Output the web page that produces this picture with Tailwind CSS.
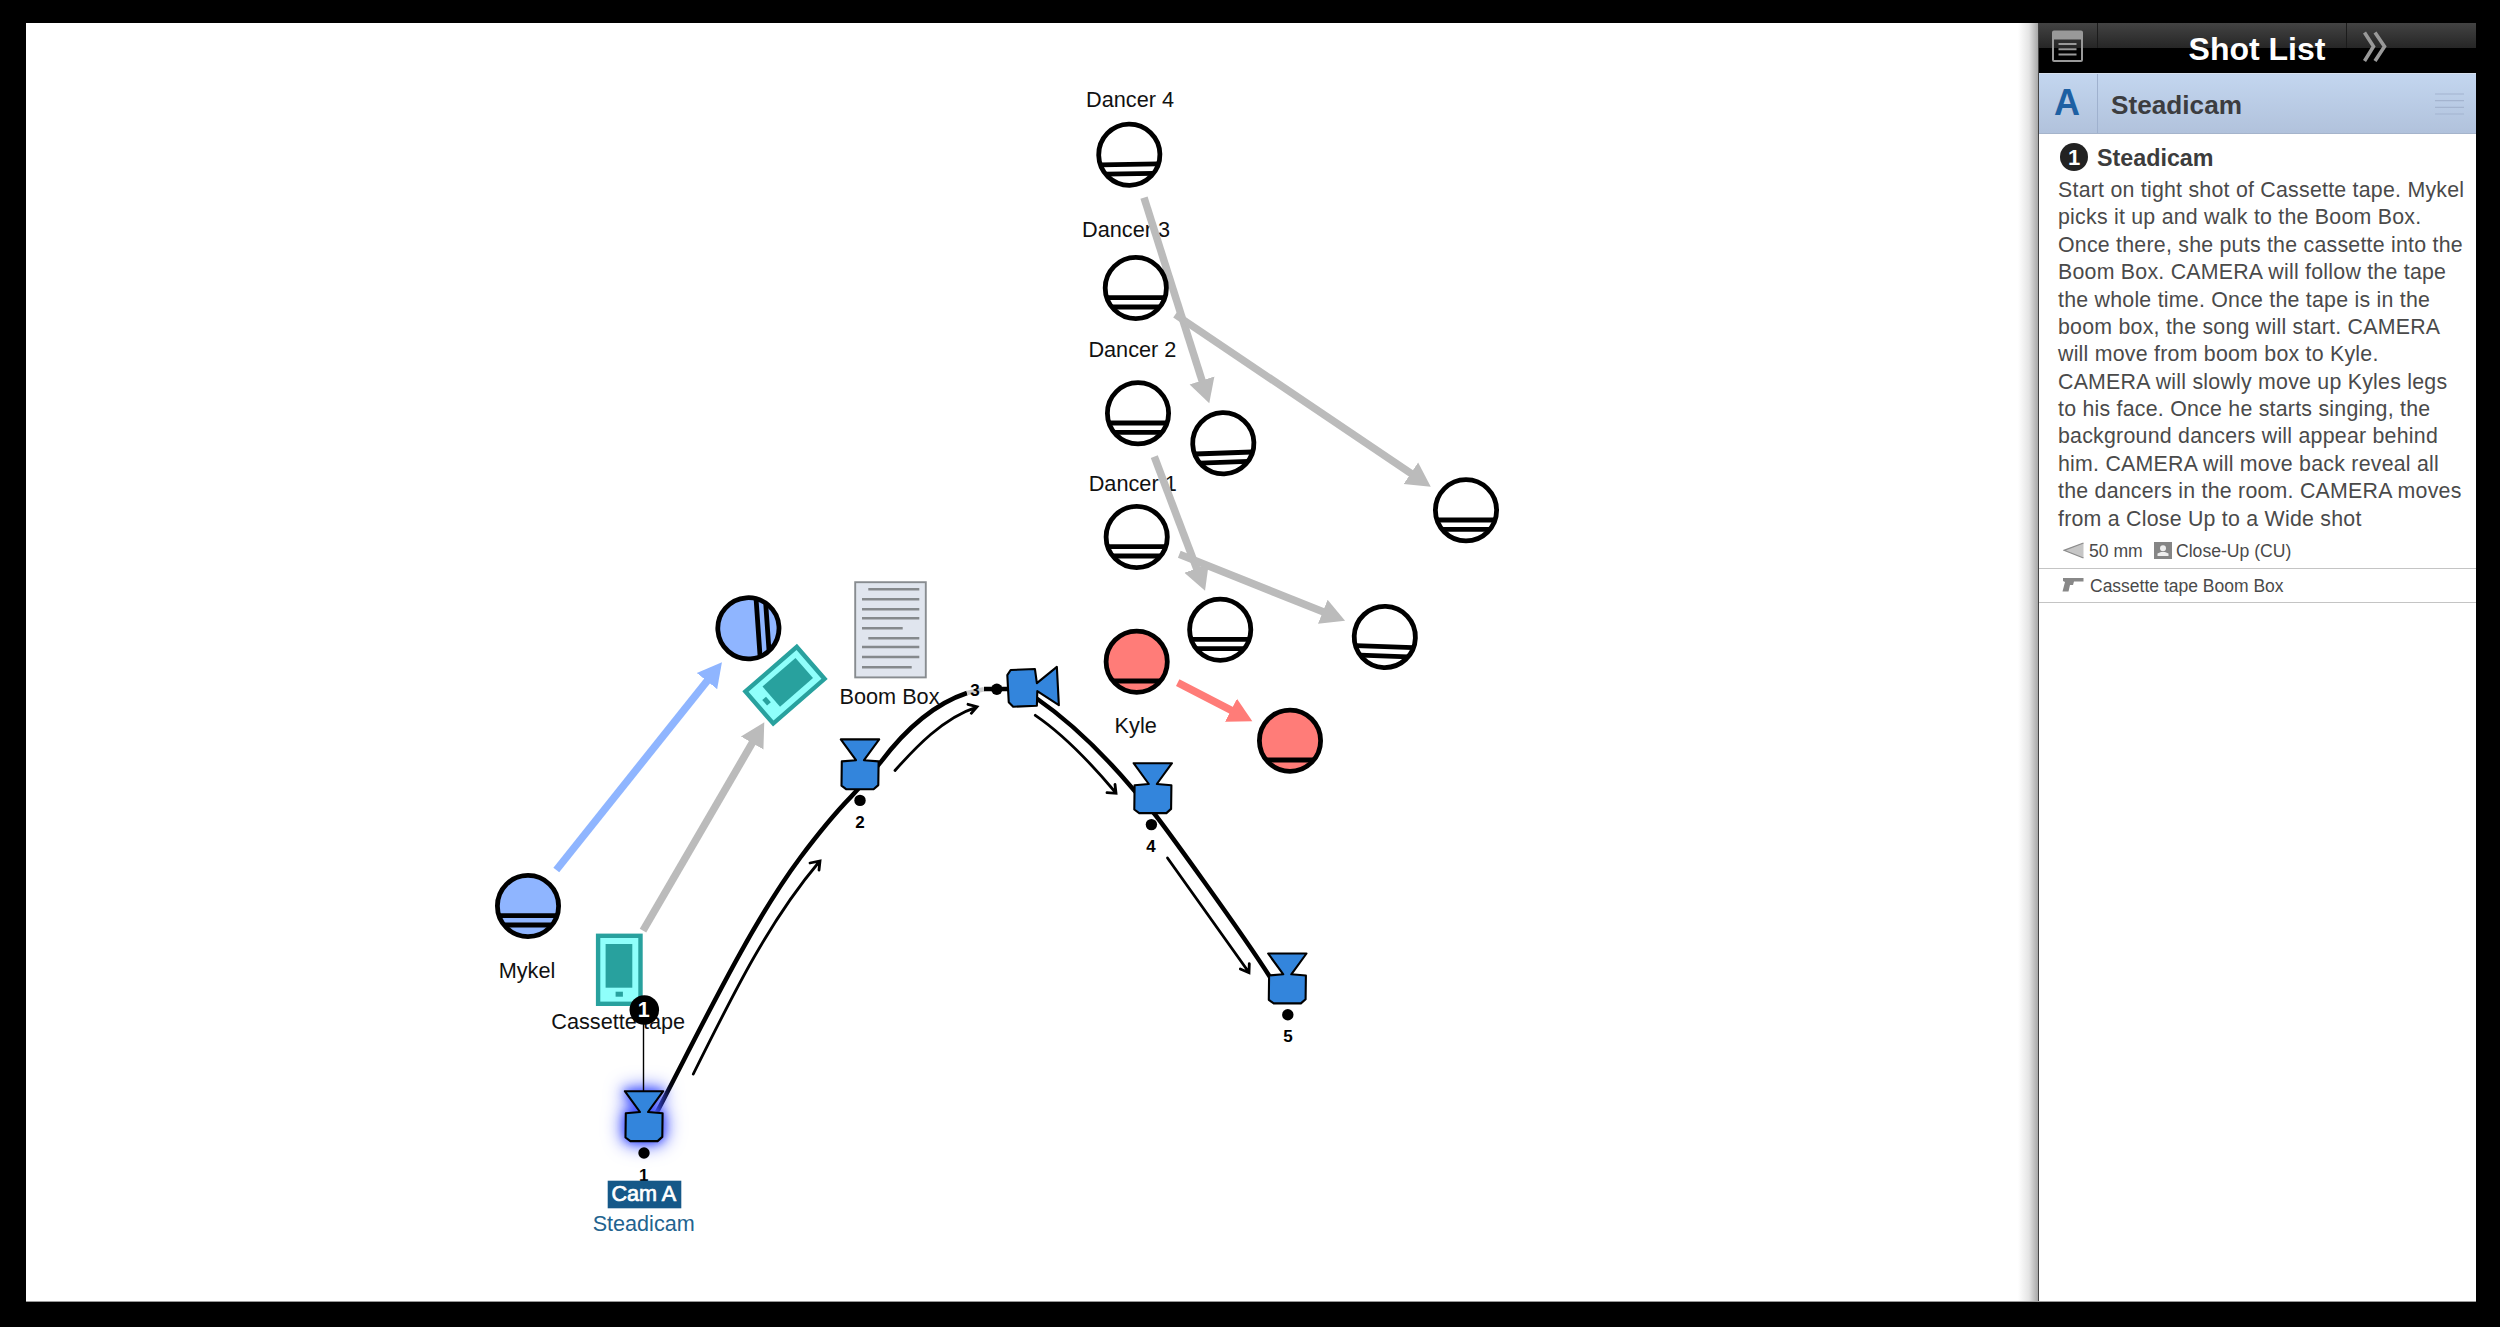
<!DOCTYPE html>
<html lang="en">
<head>
  <meta charset="UTF-8" />
  <meta name="viewport" content="width=device-width, initial-scale=1.0" />
  <title>Shot List</title>
  <script src="https://cdn.jsdelivr.net/npm/@tailwindcss/browser@4"></script>
</head>
<body class="bg-black font-['Liberation_Sans',Arial,sans-serif]">

  <div class="w-[2500px] h-[1327px] pt-[23px] pl-[26px] overflow-hidden">
    <div class="flex w-[2450px] h-[1279px] bg-white border-b border-[#999]">

      <!-- Floor plan -->
      <main class="w-[2012px] shrink-0 bg-linear-to-l from-[#a8a8a8] via-[#e4e4e4] via-[9px] to-white to-[20px]">
        <svg class="block w-[2012px] h-[1278px]" viewBox="26 23 2012 1278" fill="none">
          <defs>
            <marker id="head-gray" markerUnits="userSpaceOnUse" markerWidth="26" markerHeight="28" refX="1" refY="14" orient="auto"><path d="M0 1 24 14 0 27z" fill="#bbb" /></marker>
            <marker id="head-blue" markerUnits="userSpaceOnUse" markerWidth="26" markerHeight="28" refX="1" refY="14" orient="auto"><path d="M0 1 24 14 0 27z" fill="#8fb5ff" /></marker>
            <marker id="head-red" markerUnits="userSpaceOnUse" markerWidth="26" markerHeight="28" refX="1" refY="14" orient="auto"><path d="M0 1 24 14 0 27z" fill="#ff7c78" /></marker>
            <g id="person" stroke="#000" stroke-width="4.8">
              <circle r="30.6" />
              <path d="M-28.5 9.7h57M-24 19h48" />
            </g>
            <g id="person-single" stroke="#000" stroke-width="4.8">
              <circle r="30.6" />
              <path d="M-24 19.3h48" />
            </g>
            <g id="phone">
              <rect x="-21.2" y="-34" width="42.4" height="68" fill="#8ffffb" stroke="#28a19e" stroke-width="4.4" />
              <rect x="-13.7" y="-25.8" width="26.7" height="43.7" fill="#28a19e" />
              <rect x="-3.7" y="21.9" width="7.3" height="5" fill="#28a19e" />
            </g>
            <path id="camera" d="M-19.2-27.3H19.2L4-6.5 18.6-5.3 18.3 18.4 13.6 22.6H-13.6L-18.5 19-18.2-5.3-4-6.5z" fill="#3385dc" stroke="#000" stroke-width="2.1" stroke-linejoin="round" />
          </defs>

          <!-- labels -->
          <g class="text-[21.7px]" fill="#111" text-anchor="middle">
            <text x="1130" y="106.7">Dancer 4</text>
            <text x="1126" y="236.7">Dancer 3</text>
            <text x="1132.4" y="357">Dancer 2</text>
            <text x="1132.7" y="490.7">Dancer 1</text>
            <text x="1135.700" y="733.3">Kyle</text>
            <text x="889.5" y="704">Boom Box</text>
            <text x="527" y="977.7">Mykel</text>
            <text x="618.2" y="1028.7">Cassette tape</text>
          </g>

          <!-- movement arrows -->
          <g stroke="#bbb" stroke-width="7.5">
            <path d="M1144 197.7 1202.3 381.4" marker-end="url(#head-gray)" />
            <path d="M1175.3 314.5 1411.7 473.8" marker-end="url(#head-gray)" />
            <path d="M1154.3 456.7 1196.9 569.2" marker-end="url(#head-gray)" />
            <path d="M1179.3 554.3 1323.7 612.1" marker-end="url(#head-gray)" />
            <path d="M643 930.7 752.7 742.2" marker-end="url(#head-gray)" />
            <path d="M556.3 870 707.6 680.3" stroke="#8fb5ff" marker-end="url(#head-blue)" />
            <path d="M1177.7 682.7 1231.9 710.7" stroke="#ff7c78" marker-end="url(#head-red)" />
          </g>

          <!-- people -->
          <use href="#person" transform="translate(1129.3 154.7) rotate(-1)" />
          <use href="#person" transform="translate(1135.8 288)" />
          <use href="#person" transform="translate(1138 413.3)" />
          <use href="#person" transform="translate(1136.7 537)" />
          <use href="#person" transform="translate(1223.3 443.3) rotate(-2)" />
          <use href="#person" transform="translate(1466 510.3)" />
          <use href="#person" transform="translate(1220.2 629.7)" />
          <use href="#person" transform="translate(1384.8 637) rotate(2)" />
          <use href="#person" fill="#8fb5ff" transform="translate(528 906)" />
          <use href="#person" fill="#8fb5ff" transform="translate(748.4 628.3) rotate(-94)" />
          <use href="#person-single" fill="#ff7c78" transform="translate(1136.7 661.7)" />
          <use href="#person-single" fill="#ff7c78" transform="translate(1290 740.7)" />

          <!-- props -->
          <use href="#phone" transform="translate(619.3 969.8)" />
          <use href="#phone" transform="translate(785 685.2) rotate(49)" />
          <rect x="855.2" y="582.2" width="70.6" height="95.2" fill="#e0e5ee" stroke="#888c90" stroke-width="1.9" />
          <path d="M868.3 589.3h51M862 599.3h57.3M862 609.3h57.3M862 618.3h57.3M862 628.3h40.7M868.3 638.3h51M862 647h57.3M862 657h57.3M862 667.3h49.7" stroke="#85898c" stroke-width="2.4" />

          <!-- camera track -->
          <g stroke="#000" stroke-width="4.5">
            <path d="M657 1112C700 1030 750 925 800 858S850 803 880 763S940 702 967 693" />
            <path d="M967 693 984 689.3" stroke="#ccc" />
            <path d="M984 689H1012" />
            <path d="M1036 698C1065 718 1100 750 1133 789L1153 812C1162 823 1240 930 1270 977" />
          </g>
          <g stroke="#000" stroke-width="2.8" stroke-linecap="round">
            <path d="M693.3 1074C735 990 770 920 819 862M810 863 820 861 819 870" />
            <path d="M895 770.5C915 748 943 718 976 707.3M968 704.3 977 706.7 971.3 713.3" />
            <path d="M1035.3 715.3C1060 732 1090 762 1116 793M1115 784.5 1116 793.3 1107 792.6" />
            <path d="M1167.5 858 1249 972.5M1249.3 963.6 1249 972.7 1240.3 969" />
          </g>

          <!-- cameras -->
          <use href="#camera" class="[filter:drop-shadow(0_0_5px_#4a5cff)_drop-shadow(0_0_9px_#3a4cff)]" x="644" y="1118.5" />
          <use href="#camera" x="860" y="766.7" />
          <use href="#camera" transform="translate(1030.6 687.5) rotate(87)" />
          <use href="#camera" x="1152.8" y="790.5" />
          <use href="#camera" x="1287.3" y="980.8" />
          <g fill="#000">
            <circle cx="644" cy="1153" r="5.7" />
            <circle cx="860" cy="800.4" r="5.7" />
            <circle cx="996.8" cy="689.3" r="5.7" />
            <circle cx="1151.4" cy="824.6" r="5.7" />
            <circle cx="1287.8" cy="1014.7" r="5.7" />
          </g>
          <g class="text-[17px] font-bold" fill="#000" text-anchor="middle">
            <text x="643.7" y="1181">1</text>
            <text x="860" y="828">2</text>
            <text x="975" y="696.3">3</text>
            <text x="1151" y="852">4</text>
            <text x="1288" y="1042.3">5</text>
          </g>
          <path d="M643.5 1022V1091" stroke="#000" stroke-width="1.4" />
          <circle cx="644.3" cy="1010" r="14.8" fill="#000" />
          <text class="text-[21.5px] font-bold" x="643.8" y="1017.2" fill="#fff" text-anchor="middle">1</text>

          <rect x="607.7" y="1180.7" width="73.6" height="27.6" fill="#155888" />
          <g class="text-[21.6px]" text-anchor="middle">
            <text x="643.8" y="1200.7" fill="#fff" stroke="#fff" stroke-width=".7">Cam A</text>
            <text x="643.7" y="1230.7" fill="#22638f">Steadicam</text>
          </g>
        </svg>
      </main>

      <!-- Shot list panel -->
      <aside class="flex-1 border-l border-[#444] bg-white">
        <header class="flex h-[50px] text-white bg-linear-to-b from-[#434343] to-[#262626] to-[25px] bg-[length:100%_25px] bg-no-repeat bg-black">
          <div class="w-[58px] pl-[13px] pt-[7px]">
            <svg class="w-[31px] h-[33px]" viewBox="0 0 31 33" fill="none" stroke="#999">
              <rect x="1" y="1.5" width="29" height="29.5" rx="1" stroke-width="2" />
              <path d="M1 5.5h29" stroke-width="8" />
              <path d="M6.500 14h18M6.500 19.300h18M6.500 24.600h18" stroke-width="2" />
            </svg>
          </div>
          <span class="w-px h-[25px] bg-[#1b1b1b]"></span>
          <h1 class="w-[248px] pl-[70px] pt-px text-center text-[32px] leading-[50px] font-bold whitespace-nowrap">Shot List</h1>
          <span class="w-px h-[25px] bg-[#1b1b1b]"></span>
          <svg class="ml-[16px] mt-[8px] w-[25px] h-[32px]" viewBox="0 0 25 32" fill="none" stroke="#999" stroke-width="3.6">
            <path d="M1.500 1.500 10.500 15.500 1.500 30M12 1.500 21.500 15.500 12 30" />
          </svg>
        </header>

        <section class="flex items-center h-[61px] border-t border-[#d5e0ee] border-b border-b-[#a5b4cb] bg-linear-to-b from-[#c3d6ef] to-[#b1c2dc]">
          <div class="w-[58px] text-center text-[36px] leading-[59px] -mt-[2px] pr-[2px] font-bold text-[#1e60a3]">A</div>
          <span class="w-px h-[59px] bg-[#9fb1ce]"></span>
          <h2 class="pl-[13px] pt-[3px] text-[26.2px] leading-[59px] font-bold text-[#3c3d40]">Steadicam</h2>
          <svg class="ml-auto mr-[12px] w-[29px] h-[22px]" viewBox="0 0 29 22" stroke="#a4b4cf" stroke-width="1.2">
            <path d="M0 1h29M0 7.700h29M0 14.300h29M0 21h29" />
          </svg>
        </section>

        <article class="pt-[8px] text-[#4a4a4a]">
          <div class="flex items-center gap-[9px] pl-[21px] h-[30px]">
            <span class="w-[28px] h-[28px] rounded-full bg-[#222] text-white text-[22px] leading-[29px] font-bold text-center">1</span>
            <h3 class="pt-px text-[23.300px] leading-[30px] font-bold text-[#3c3c3c]">Steadicam</h3>
          </div>
          <p class="pt-[5px] pl-[19px] text-[21.33px] leading-[27.38px] tracking-[0.24px] whitespace-nowrap">
            Start on tight shot of Cassette tape. Mykel<br>
            picks it up and walk to the Boom Box.<br>
            Once there, she puts the cassette into the<br>
            Boom Box. CAMERA will follow the tape<br>
            the whole time. Once the tape is in the<br>
            boom box, the song will start. CAMERA<br>
            will move from boom box to Kyle.<br>
            CAMERA will slowly move up Kyles legs<br>
            to his face. Once he starts singing, the<br>
            background dancers will appear behind<br>
            him. CAMERA will move back reveal all<br>
            the dancers in the room. CAMERA moves<br>
            from a Close Up to a Wide shot
          </p>
          <div class="flex items-center h-[36px] pl-[24px] text-[17.6px] border-b border-[#c4c4c4]">
            <svg class="w-[21px] h-[17px]" viewBox="0 0 21 17">
              <path d="M1 8.300 20.500 1V16z" fill="#c6c6c6" />
              <path d="M20.500 1 1 8.300 20.500 16" fill="none" stroke="#8c8c8c" stroke-width="1.300" />
            </svg>
            <span class="pl-[5px] pt-[2px] w-[70px]">50 mm</span>
            <svg class="w-[18px] h-[17px]" viewBox="0 0 18 17">
              <path d="M0 0h18v17H0z" fill="#858585" />
              <circle cx="9" cy="6.300" r="3" fill="#eee" />
              <path d="M3.500 14V11.500L7 10H11L14.500 11.500V14z" fill="#eee" />
            </svg>
            <span class="pl-[4px] pt-[2px]">Close-Up (CU)</span>
          </div>
          <div class="flex items-center h-[34px] pl-[23px] text-[17.500px] border-b border-[#c4c4c4]">
            <svg class="-mt-[2px] w-[22px] h-[15px]" viewBox="0 0 22 15">
              <path d="M1 1H21.500V4.500H12L11 8H8L6.500 14.500H.5L3 5 1 4z" fill="#888" />
            </svg>
            <span class="pl-[6px] pt-[2px]">Cassette tape Boom Box</span>
          </div>
        </article>
      </aside>

    </div>
  </div>

</body>
</html>
